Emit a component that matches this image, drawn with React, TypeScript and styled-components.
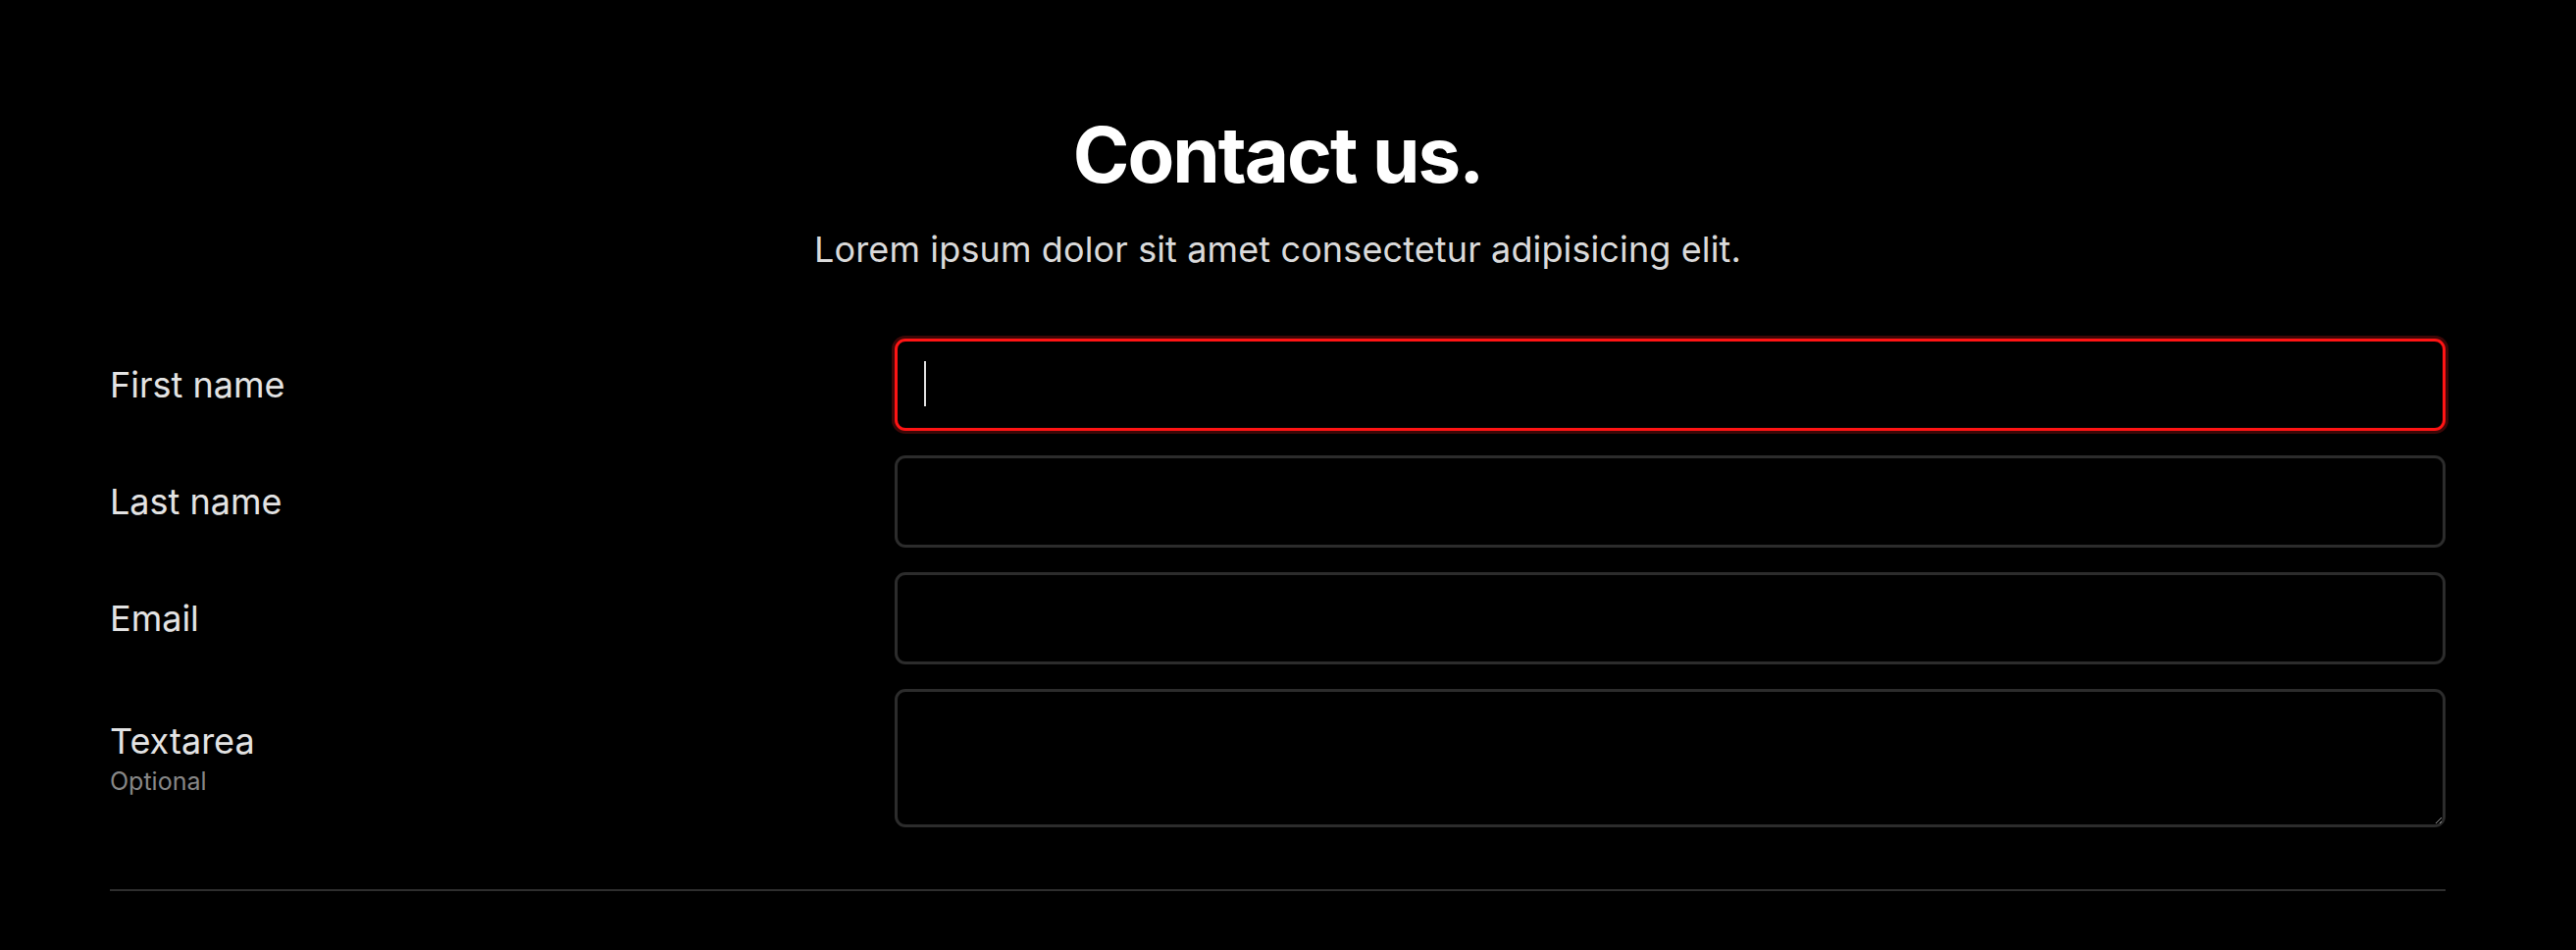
import React from "react";
import styled, { createGlobalStyle } from "styled-components";

const GlobalStyle = createGlobalStyle`
  html, body {
    margin: 0;
    padding: 0;
    background: #000;
  }
  body {
    font-family: Inter, "Noto Sans", "Liberation Sans", sans-serif;
    color: #e3e3e3;
  }
  * { box-sizing: border-box; }
`;

const Page = styled.div`
  min-height: 968px;
  background: #000;
  padding: 110px 133px 0 112px;
`;

const Header = styled.header`
  display: flex;
  flex-direction: column;
  align-items: center;
  text-align: center;
`;

const Title = styled.h1`
  margin: 0;
  font-size: 78px;
  line-height: 96px;
  font-weight: 700;
  letter-spacing: -2px;
  color: #fff;
`;

const Subtitle = styled.p`
  margin: 21px 0 0;
  font-size: 36px;
  line-height: 54px;
  font-weight: 400;
  letter-spacing: 0.12px;
  color: #dadada;
`;

const Form = styled.form`
  margin-top: 64px;
  display: grid;
  grid-template-columns: 800px 1fr;
  row-gap: 25px;
  align-items: center;
`;

const LabelBlock = styled.div`
  display: flex;
  flex-direction: column;
`;

const Label = styled.label`
  font-size: 36px;
  line-height: 44px;
  color: #e3e3e3;
`;

const Hint = styled.span`
  margin-top: 3px;
  font-size: 25px;
  line-height: 32px;
  color: #878787;
`;

const Field = styled.div`
  position: relative;
  display: flex;
`;

const Input = styled.input<{ $focused?: boolean }>`
  width: 100%;
  height: 94px;
  padding: 0 27px;
  background: #000;
  border: 3px solid ${(p) => (p.$focused ? "#ff1414" : "#2c2c2c")};
  border-radius: 11px;
  box-shadow: ${(p) => (p.$focused ? "0 0 0 3px #3c0707" : "none")};
  color: #e6e6e6;
  font-family: inherit;
  font-size: 36px;
  outline: none;
  caret-color: transparent;
`;

const Caret = styled.span`
  position: absolute;
  left: 30px;
  top: 23px;
  width: 2px;
  height: 46px;
  background: #e0e0e0;
`;

const TextArea = styled.textarea`
  width: 100%;
  height: 141px;
  padding: 20px 27px;
  background: #000;
  border: 3px solid #2c2c2c;
  border-radius: 11px;
  color: #e6e6e6;
  font-family: inherit;
  font-size: 36px;
  outline: none;
  resize: vertical;
  color-scheme: dark;
  display: block;
`;

const Divider = styled.hr`
  margin: 63px 0 0;
  border: 0;
  height: 2px;
  background: #2e2e2e;
`;

export default function App() {
  return (
    <>
      <GlobalStyle />
      <Page>
        <Header>
          <Title>Contact us.</Title>
          <Subtitle>Lorem ipsum dolor sit amet consectetur adipisicing elit.</Subtitle>
        </Header>
        <Form onSubmit={(e) => e.preventDefault()}>
          <LabelBlock>
            <Label htmlFor="first">First name</Label>
          </LabelBlock>
          <Field>
            <Input id="first" $focused />
            <Caret />
          </Field>

          <LabelBlock>
            <Label htmlFor="last">Last name</Label>
          </LabelBlock>
          <Field>
            <Input id="last" />
          </Field>

          <LabelBlock>
            <Label htmlFor="email">Email</Label>
          </LabelBlock>
          <Field>
            <Input id="email" type="email" />
          </Field>

          <LabelBlock>
            <Label htmlFor="msg">Textarea</Label>
            <Hint>Optional</Hint>
          </LabelBlock>
          <Field>
            <TextArea id="msg" />
          </Field>
        </Form>
        <Divider />
      </Page>
    </>
  );
}
